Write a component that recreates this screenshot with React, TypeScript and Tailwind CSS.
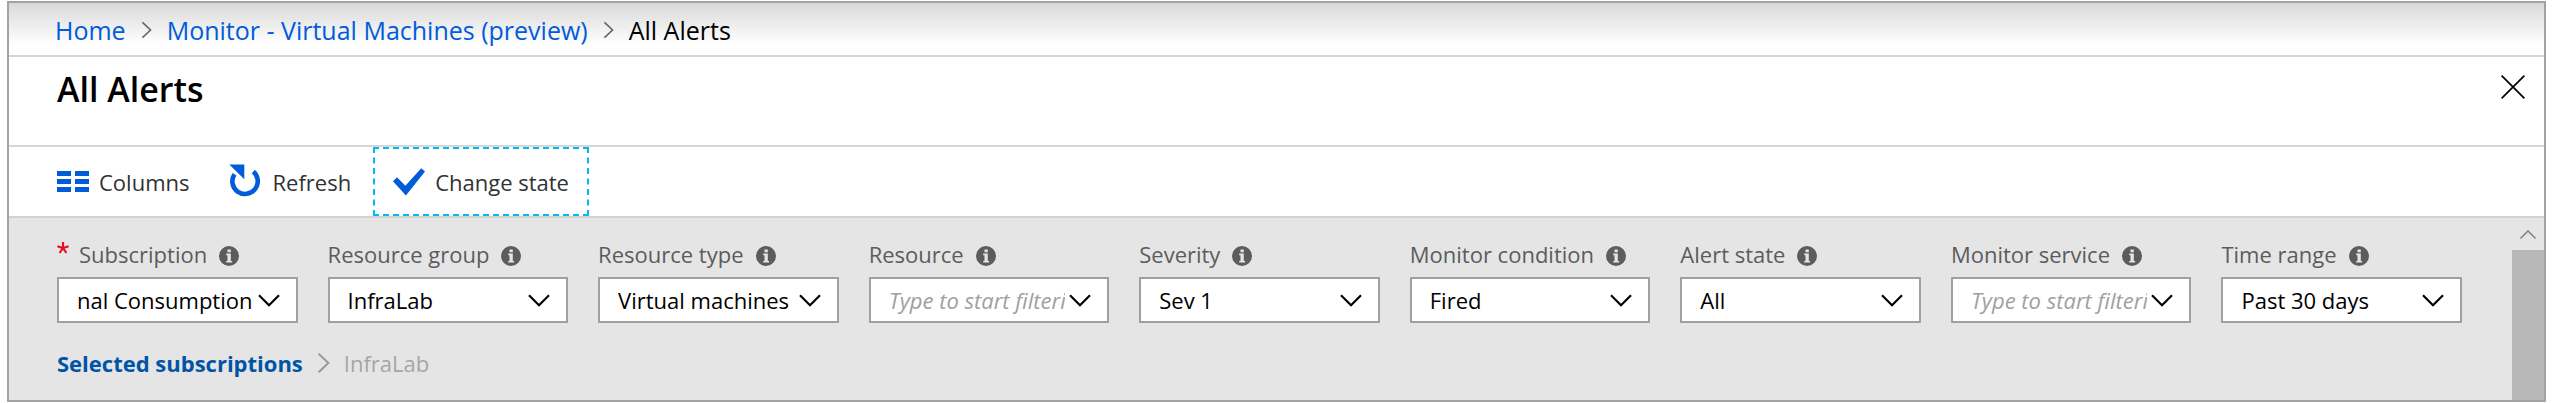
import { useId } from "react";

type Filter = {
  label: string;
  value?: string;
  placeholder?: string;
  required?: boolean;
};

const filters: Filter[] = [
  { label: "Subscription", value: "nal Consumption", required: true },
  { label: "Resource group", value: "InfraLab" },
  { label: "Resource type", value: "Virtual machines" },
  { label: "Resource", placeholder: "Type to start filtering" },
  { label: "Severity", value: "Sev 1" },
  { label: "Monitor condition", value: "Fired" },
  { label: "Alert state", value: "All" },
  { label: "Monitor service", placeholder: "Type to start filtering" },
  { label: "Time range", value: "Past 30 days" },
];

function ChevronRight({ className }: { className: string }) {
  return (
    <svg viewBox="0 0 12 20" fill="none" stroke="currentColor" strokeWidth="1.8" className={className} aria-hidden="true">
      <path d="M1.5 1.5 10.500 10 1.5 18.5" />
    </svg>
  );
}

function InfoIcon() {
  return (
    <svg viewBox="0 0 20 20" className="mt-1 size-5 shrink-0" aria-hidden="true">
      <circle cx="10" cy="10" r="10" fill="#5c5c5c" />
      <path fill="#e5e5e5" d="M8.5 3.4h3.300v2.800H8.500zM7.2 7.600h4.600v7.400h1.300v1.600H7.200V15h1.300V9.200H7.200z" />
    </svg>
  );
}

function FilterField({ label, value, placeholder, required }: Filter) {
  const id = useId();
  const box = "h-[46px] w-full appearance-none rounded-none border-2 border-[#a0a0a0] bg-white pl-[18px] text-[22px] leading-8 text-black outline-none";
  return (
    <div className="min-w-0">
      <div className="flex h-9 items-center gap-3 text-[22px] leading-8 whitespace-nowrap text-[#5c5c5c]">
        <label htmlFor={id} className="flex items-center gap-[10px]">
          {required && (
            <svg viewBox="0 0 12 12" className="mb-3 size-3" fill="none" stroke="#e81123" strokeWidth="2.2" aria-label="required">
              <path d="M6 0v6M0.4 4.2 6 6l5.6-1.8M2.6 11 6 6l3.4 5" />
            </svg>
          )}
          {label}
        </label>
        <InfoIcon />
      </div>
      <div className="relative mt-[5px]">
        {value ? (
          <select id={id} defaultValue={value} className={`${box} pr-9`}>
            <option>{value}</option>
          </select>
        ) : (
          <input id={id} type="text" placeholder={placeholder} className={`${box} pr-[42px] placeholder:text-[#a0a0a0] placeholder:italic`} />
        )}
        <svg viewBox="0 0 22 13" className="pointer-events-none absolute top-[17px] right-[18px] h-[13px] w-[22px]" fill="none" stroke="#000" strokeWidth="2.2" aria-hidden="true">
          <path d="M1 1.2 11 11.2 21 1.2" />
        </svg>
      </div>
    </div>
  );
}

export default function App() {
  return (
    <div className="bg-white pt-px pr-[6px] pl-[7px] font-['Open_Sans','Noto_Sans',sans-serif] text-black">
      <div className="border-2 border-[#a2a4a2]">
        <nav aria-label="Breadcrumb" className="flex h-[54px] items-center gap-[15px] border-b-2 border-[#d6d6d6] bg-linear-to-b from-[#d9d9d9] to-white to-80% pt-[2px] pl-[46px] text-[25px] leading-8 whitespace-nowrap">
          <a href="#home" className="text-[#015cda]">Home</a>
          <ChevronRight className="h-[18px] w-[11px] text-[#666]" />
          <a href="#monitor" className="text-[#015cda]">Monitor - Virtual Machines (preview)</a>
          <ChevronRight className="h-[18px] w-[11px] text-[#666]" />
          <span aria-current="page">All Alerts</span>
        </nav>

        <header className="flex h-[90px] items-start justify-between border-b-2 border-[#d6d6d6] pt-2 pr-[19px] pl-12">
          <h1 className="text-[34px] leading-[48px] font-semibold">All Alerts</h1>
          <button type="button" aria-label="Close" className="mt-[10px]">
            <svg viewBox="0 0 24 24" className="size-6" fill="none" stroke="#000" strokeWidth="1.7">
              <path d="M.6.6 23.4 23.4M23.4.6.6 23.4" />
            </svg>
          </button>
        </header>

        <div role="toolbar" className="flex h-[71px] items-stretch gap-1 border-b-2 border-[#d2d2d2] pl-[30px] text-[22px] leading-8 whitespace-nowrap text-[#323232]">
          <button type="button" className="flex items-center gap-[10px] px-[18px]">
            <svg viewBox="0 0 32 21" className="h-[21px] w-8" fill="#015cda" aria-hidden="true">
              <path d="M0 0h14v5H0zM18 0h14v5H18zM0 8h14v5H0zM18 8h14v5H18zM0 16h14v5H0zM18 16h14v5H18z" />
            </svg>
            Columns
          </button>
          <button type="button" className="flex items-center gap-3 px-[18px]">
            <svg viewBox="0 0 31 33" className="mb-[2px] h-[33px] w-[31px]" aria-hidden="true">
              <path d="M24.300 7.600A12.700 12.700 0 1 1 5.500 10.200" fill="none" stroke="#015cda" strokeWidth="4.600" />
              <path d="M.3.6H15.300v14.600z" fill="#015cda" />
            </svg>
            Refresh
          </button>
          <button type="button" className="flex items-center gap-[10px] border-2 border-dashed border-[#00bcf2] px-[18px]">
            <svg viewBox="0 0 32 28" className="h-7 w-8" fill="#015cda" aria-hidden="true">
              <path d="M0 13.200 4 9.300 12.400 17.800 28.200.3 32 3.600 12.900 27.500z" />
            </svg>
            Change state
          </button>
        </div>

        <div className="flex bg-[#e5e5e5]">
          <main className="min-w-0 flex-1 pt-[18px] pr-[50px] pb-[21px] pl-12">
            <div className="grid grid-cols-9 gap-[30px]">
              {filters.map((f) => (
                <FilterField key={f.label} {...f} />
              ))}
            </div>
            <div className="mt-6 flex items-center gap-[14px] text-[22px] leading-8 whitespace-nowrap">
              <a href="#subscriptions" className="font-bold text-[#0054a6]">Selected subscriptions</a>
              <ChevronRight className="h-[22px] w-[13px] text-[#999]" />
              <span className="text-[#a6a6a6]">InfraLab</span>
            </div>
          </main>
          <div className="flex w-8 shrink-0 flex-col">
            <button type="button" aria-label="Scroll up" className="flex h-8 items-center justify-center">
              <svg viewBox="0 0 16 9" className="h-[9px] w-4" fill="none" stroke="#777" strokeWidth="1.3">
                <path d="M.5 8.5 8 1l7.500 7.500" />
              </svg>
            </button>
            <div className="flex-1 bg-[#b8b8b8]" />
          </div>
        </div>
      </div>
    </div>
  );
}
